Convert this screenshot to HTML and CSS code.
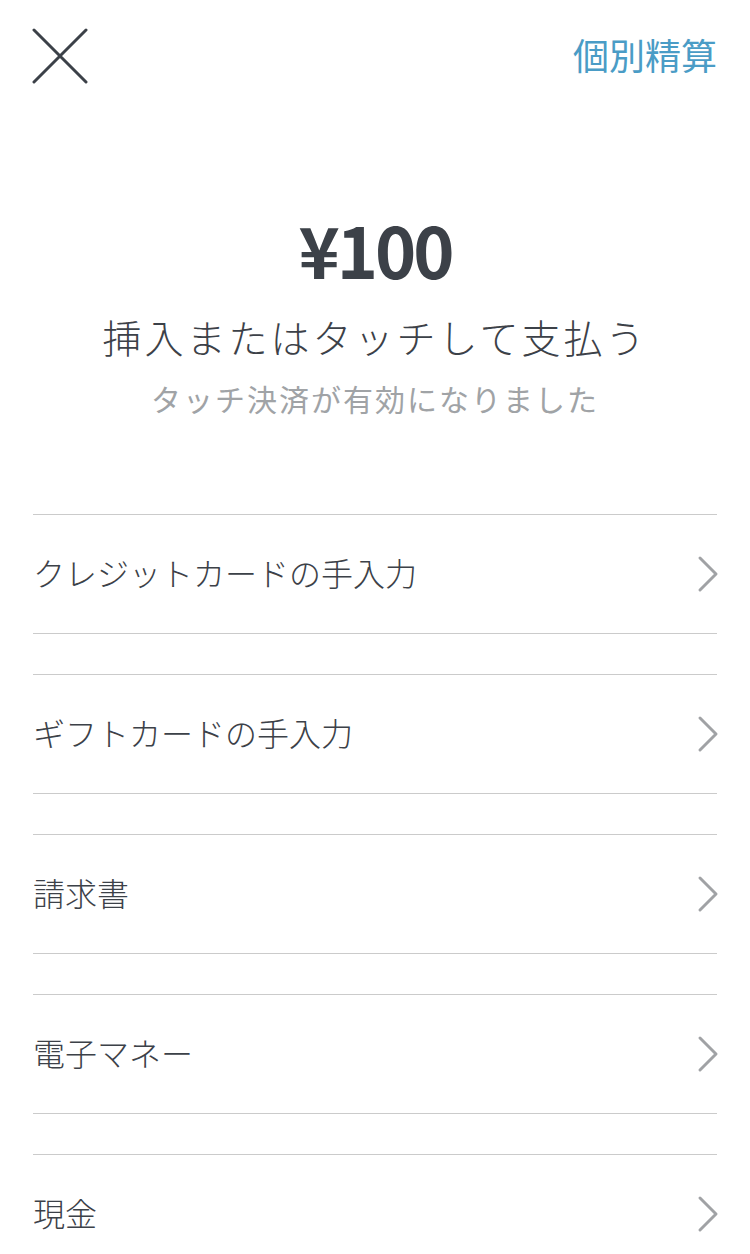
FILE: index.html
```html
<!DOCTYPE html>
<html lang="ja">
<head>
    <meta charset="UTF-8">
    <meta name="viewport" content="width=device-width, initial-scale=1.0">
    <title>支払い</title>
    <link rel="stylesheet" href="styles.css">
</head>
<body>

    <div class="header">
        <svg class="close" width="56" height="56" viewBox="0 0 56 56">
            <path d="M2 2 L54 54 M54 2 L2 54" stroke="#3c4148" stroke-width="3" stroke-linecap="round" fill="none"/>
        </svg>
        <span class="split">個別精算</span>
    </div>

    <div class="amount">¥100</div>
    <div class="title">挿入またはタッチして支払う</div>
    <div class="subtitle">タッチ決済が有効になりました</div>

    <ul class="methods">
        <li>
            <span>クレジットカードの手入力</span>
            <svg class="chevron" width="22" height="38" viewBox="0 0 22 38"><path d="M3 3 L19 19 L3 35" stroke="#a0a2a5" stroke-width="3" stroke-linecap="round" stroke-linejoin="round" fill="none"/></svg>
        </li>
        <li>
            <span>ギフトカードの手入力</span>
            <svg class="chevron" width="22" height="38" viewBox="0 0 22 38"><path d="M3 3 L19 19 L3 35" stroke="#a0a2a5" stroke-width="3" stroke-linecap="round" stroke-linejoin="round" fill="none"/></svg>
        </li>
        <li>
            <span>請求書</span>
            <svg class="chevron" width="22" height="38" viewBox="0 0 22 38"><path d="M3 3 L19 19 L3 35" stroke="#a0a2a5" stroke-width="3" stroke-linecap="round" stroke-linejoin="round" fill="none"/></svg>
        </li>
        <li>
            <span>電子マネー</span>
            <svg class="chevron" width="22" height="38" viewBox="0 0 22 38"><path d="M3 3 L19 19 L3 35" stroke="#a0a2a5" stroke-width="3" stroke-linecap="round" stroke-linejoin="round" fill="none"/></svg>
        </li>
        <li>
            <span>現金</span>
            <svg class="chevron" width="22" height="38" viewBox="0 0 22 38"><path d="M3 3 L19 19 L3 35" stroke="#a0a2a5" stroke-width="3" stroke-linecap="round" stroke-linejoin="round" fill="none"/></svg>
        </li>
    </ul>

</body>
</html>
```

FILE: styles.css
```css
body {
    margin: 0;
    font-family: "Noto Sans CJK JP", "Noto Sans", sans-serif;
    background: white;
    color: #3c4148;
    overflow: hidden;
}
.header {
    display: flex;
    justify-content: space-between;
    align-items: center;
    padding: 28px 33px 0 32px;
    height: 56px;
}
.close {
    display: block;
}
.split {
    color: #4a9cc6;
    font-size: 36px;
    line-height: 56px;
    margin-top: -4px;
}
.amount {
    margin-top: 125px;
    text-align: center;
    font-size: 70px;
    font-weight: bold;
    line-height: 80px;
    letter-spacing: -3px;
}
.title {
    margin-top: 22px;
    text-align: center;
    font-size: 39px;
    line-height: 50px;
    letter-spacing: 3px;
    font-weight: 300;
}
.subtitle {
    margin-top: 17px;
    text-align: center;
    font-size: 30px;
    line-height: 40px;
    letter-spacing: 2px;
    color: #a0a3a6;
}
.methods {
    list-style: none;
    margin: 96px 33px 0 33px;
    padding: 0;
}
.methods li {
    display: flex;
    justify-content: space-between;
    align-items: center;
    height: 118px;
    border-top: 1px solid #cbcbcb;
    border-bottom: 1px solid #cbcbcb;
    margin-bottom: 40px;
    font-size: 32px;
    font-weight: 300;
}
.methods li span {
    padding-bottom: 5px;
}
.chevron {
    display: block;
    margin-right: -2px;
}
```
